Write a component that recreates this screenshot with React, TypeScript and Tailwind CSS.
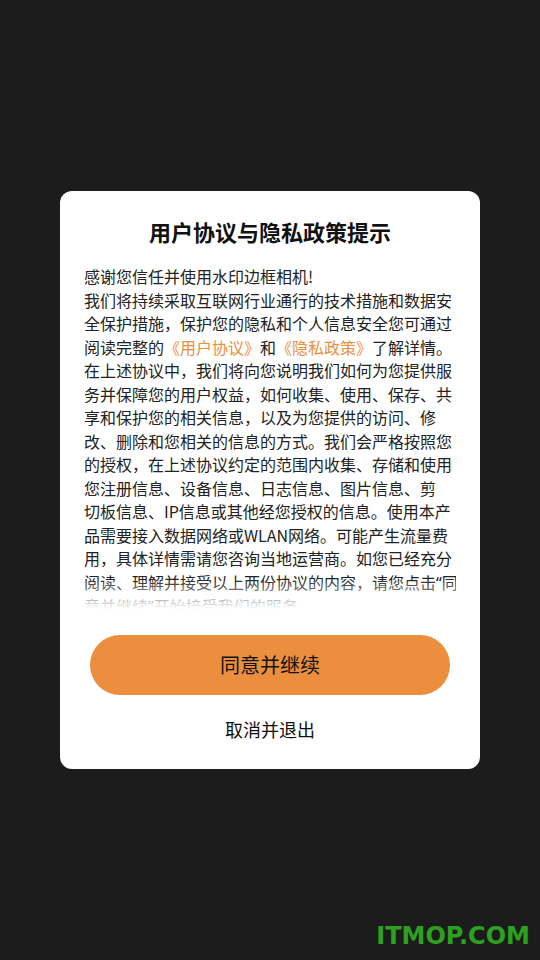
const latin = { fontFamily: '"Noto Sans", sans-serif' };

const lines: React.ReactNode[] = [
  "感谢您信任并使用水印边框相机!",
  "我们将持续采取互联网行业通行的技术措施和数据安",
  "全保护措施，保护您的隐私和个人信息安全您可通过",
  <>
    阅读完整的<span className="text-[#eb8f3e]">《用户协议》</span>和
    <span className="text-[#eb8f3e]">《隐私政策》</span>了解详情。
  </>,
  "在上述协议中，我们将向您说明我们如何为您提供服",
  "务并保障您的用户权益，如何收集、使用、保存、共",
  "享和保护您的相关信息，以及为您提供的访问、修",
  "改、删除和您相关的信息的方式。我们会严格按照您",
  "的授权，在上述协议约定的范围内收集、存储和使用",
  "您注册信息、设备信息、日志信息、图片信息、剪",
  "切板信息、IP信息或其他经您授权的信息。使用本产",
  "品需要接入数据网络或WLAN网络。可能产生流量费",
  "用，具体详情需请您咨询当地运营商。如您已经充分",
  <>
    阅读、理解并接受以上两份协议的内容，请您点击<span style={latin}>“</span>同
  </>,
  <>
    意并继续<span style={latin}>”</span>开始接受我们的服务。
  </>,
];

const font = { fontFamily: '"Noto Sans CJK SC", "Noto Sans", sans-serif' };

const PrivacyDialog = () => {
  return (
    <div className="w-[420px] rounded-[12px] bg-white px-[24px] pt-[26px] pb-[16px]" style={font}>
      <h2 className="text-center text-[22px] leading-[28px] font-bold text-[#111]">用户协议与隐私政策提示</h2>

      <div className="relative mt-[20px] h-[344px] overflow-hidden">
        {lines.map((line, i) => (
          <div key={i} className="whitespace-nowrap text-[16px] leading-[23.5px] text-[#222]">
            {line}
          </div>
        ))}
        {/* fade out the bottom of the scroll area */}
        <div className="absolute inset-x-0 bottom-0 h-[30px] bg-linear-to-b from-white/0 to-white" />
      </div>

      <div className="mt-[26px] flex flex-col items-center">
        <button className="h-[60px] w-[360px] rounded-full bg-[#eb8f3e] text-[20px] text-[#111]">
          同意并继续
        </button>
        <button className="mt-[10px] h-[48px] w-[200px] text-[18px] text-[#111]">取消并退出</button>
      </div>
    </div>
  );
};

export default function App() {
  return (
    <div className="relative flex h-[960px] w-[540px] items-center justify-center bg-[#1c1c1c]">
      <PrivacyDialog />
      <div
        className="absolute right-[10px] bottom-[8px] text-[24px] leading-[32px] font-bold text-[#2ca11f]"
        style={{ fontFamily: '"DejaVu Sans", Verdana, sans-serif' }}
      >
        ITMOP.COM
      </div>
    </div>
  );
}
